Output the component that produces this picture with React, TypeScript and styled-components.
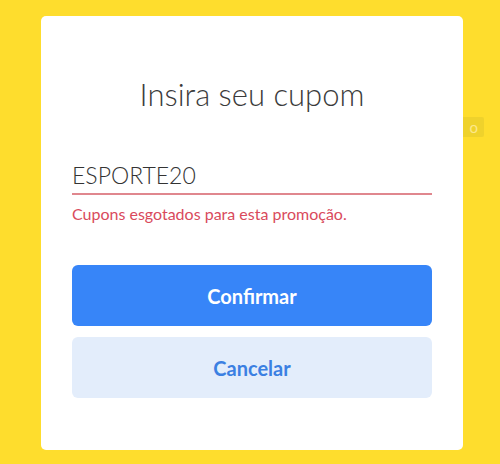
import React from "react";
import styled, { createGlobalStyle } from "styled-components";

const GlobalStyle = createGlobalStyle`
  html, body {
    margin: 0;
    padding: 0;
    background: #fedd2d;
    font-family: Lato, "Open Sans", "Liberation Sans", sans-serif;
  }
`;

const Page = styled.div`
  position: relative;
  width: 500px;
  height: 464px;
  overflow: hidden;
  padding: 16px 0 0 41px;
  box-sizing: border-box;
`;

// button of the page underneath, mostly hidden by the modal
const BehindChip = styled.div`
  position: absolute;
  top: 117px;
  left: 440px;
  width: 44px;
  height: 20px;
  border-radius: 2px;
  background: #efd22c;
  color: #fde88a;
  font-size: 15px;
  line-height: 20px;
  text-align: right;
  padding-right: 6px;
  box-sizing: border-box;
`;

const Card = styled.div`
  position: relative;
  width: 422px;
  height: 434px;
  background: #fff;
  border-radius: 5px;
  padding: 60px 31px 0;
  box-sizing: border-box;
  display: flex;
  flex-direction: column;
`;

const Title = styled.h2`
  margin: 0;
  text-align: center;
  font-size: 31px;
  line-height: 36px;
  font-weight: 300;
  color: #3b3b3b;
`;

const Input = styled.input`
  margin-top: 46px;
  border: none;
  border-bottom: 2px solid #e0878e;
  outline: none;
  padding: 0 0 2px;
  height: 33px;
  font-family: inherit;
  font-size: 23px;
  font-weight: 300;
  color: #333;
  background: transparent;
`;

const ErrorText = styled.p`
  margin: 10px 0 0;
  font-size: 16px;
  line-height: 18px;
  color: #d94a5c;
`;

const Actions = styled.div`
  margin-top: 42px;
  display: flex;
  flex-direction: column;
  gap: 11px;
`;

const Button = styled.button<{ $variant: "primary" | "secondary" }>`
  height: 61px;
  border: none;
  border-radius: 6px;
  font-family: inherit;
  font-size: 20px;
  font-weight: 700;
  cursor: pointer;
  background: ${(p) => (p.$variant === "primary" ? "#3785f8" : "#e3edfb")};
  color: ${(p) => (p.$variant === "primary" ? "#fff" : "#3b80e2")};
`;

export default function App() {
  return (
    <>
      <GlobalStyle />
      <Page>
        <BehindChip>o</BehindChip>
        <Card>
          <Title>Insira seu cupom</Title>
          <Input defaultValue="ESPORTE20" />
          <ErrorText>Cupons esgotados para esta promoção.</ErrorText>
          <Actions>
            <Button $variant="primary">Confirmar</Button>
            <Button $variant="secondary">Cancelar</Button>
          </Actions>
        </Card>
      </Page>
    </>
  );
}
